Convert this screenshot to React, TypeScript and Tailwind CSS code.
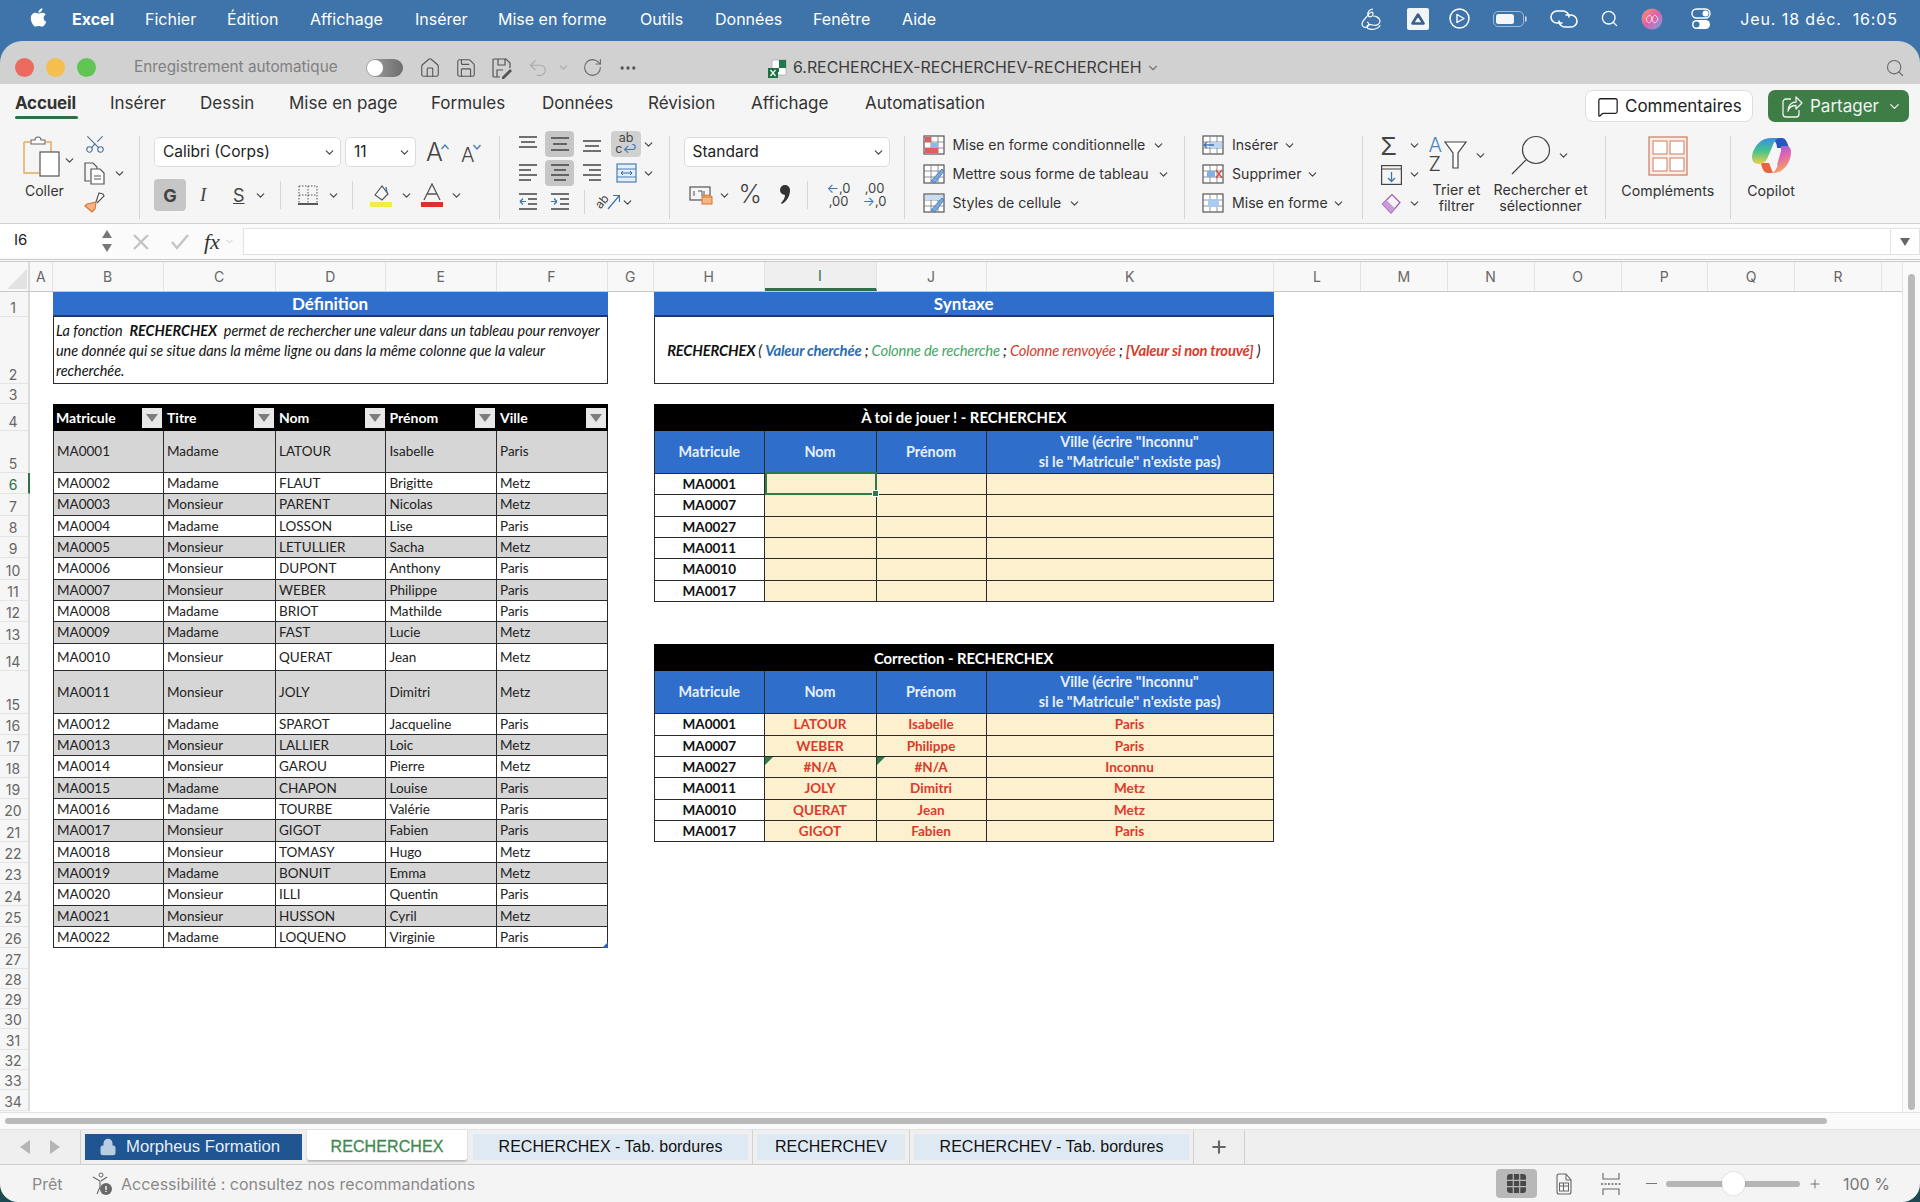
import type { ReactNode } from "react";
import { FaApple } from "react-icons/fa";
import {
  ChevronDown,
  Ellipsis,
  House,
  Lock,
  MessageSquare,
  Plus,
  RotateCw,
  Save,
  Scissors,
  Search,
  Undo2,
} from "lucide-react";

/* ─── Data ───────────────────────────────────────────────────────────── */

const UI = "font-['Inter','Liberation_Sans',sans-serif]";
const SHEET = "font-['Lato','Liberation_Sans',sans-serif]";

const MENU = [
  { label: "Fichier", w: "w-[54px]" },
  { label: "Édition", w: "w-[55px]" },
  { label: "Affichage", w: "w-[77px]" },
  { label: "Insérer", w: "w-[55px]" },
  { label: "Mise en forme", w: "w-[114px]" },
  { label: "Outils", w: "w-[47px]" },
  { label: "Données", w: "w-[70px]" },
  { label: "Fenêtre", w: "w-[61px]" },
  { label: "Aide", w: "w-[35px]" },
];

const TABS = [
  { label: "Insérer", w: "w-[57px]" },
  { label: "Dessin", w: "w-[56px]" },
  { label: "Mise en page", w: "w-[109px]" },
  { label: "Formules", w: "w-[78px]" },
  { label: "Données", w: "w-[73px]" },
  { label: "Révision", w: "w-[70px]" },
  { label: "Affichage", w: "w-[81px]" },
  { label: "Automatisation", w: "w-[125px]" },
];

const COLUMNS = [
  { label: "A", w: "w-[22.5px]" },
  { label: "B", w: "w-[111px]" },
  { label: "C", w: "w-[112px]" },
  { label: "D", w: "w-[110.5px]" },
  { label: "E", w: "w-[110.5px]" },
  { label: "F", w: "w-[111px]" },
  { label: "G", w: "w-[46.5px]" },
  { label: "H", w: "w-[110.5px]" },
  { label: "I", w: "w-[112px]" },
  { label: "J", w: "w-[110px]" },
  { label: "K", w: "w-[287.5px]" },
  { label: "L", w: "w-[87px]" },
  { label: "M", w: "w-[86.5px]" },
  { label: "N", w: "w-[87px]" },
  { label: "O", w: "w-[87px]" },
  { label: "P", w: "w-[86.5px]" },
  { label: "Q", w: "w-[87px]" },
  { label: "R", w: "w-[87px]" },
];

const ROW_H = "h-[21.33px]";
const BLANK_H = "h-[20.3px]";
const ROW_HEADS = [
  "h-[25px]", "h-[67px]", "h-[20px]", "h-[27px]", "h-[42px]",
  ROW_H, ROW_H, ROW_H, ROW_H, ROW_H, ROW_H, ROW_H, ROW_H,
  "h-[27px]", "h-[43px]",
  ROW_H, ROW_H, ROW_H, ROW_H, ROW_H, ROW_H, ROW_H, ROW_H, ROW_H, ROW_H, ROW_H,
  BLANK_H, BLANK_H, BLANK_H, BLANK_H, BLANK_H, BLANK_H, BLANK_H, BLANK_H,
];

const PEOPLE = [
  ["MA0001", "Madame", "LATOUR", "Isabelle", "Paris", "h-[42px]"],
  ["MA0002", "Madame", "FLAUT", "Brigitte", "Metz", ROW_H],
  ["MA0003", "Monsieur", "PARENT", "Nicolas", "Metz", ROW_H],
  ["MA0004", "Madame", "LOSSON", "Lise", "Paris", ROW_H],
  ["MA0005", "Monsieur", "LETULLIER", "Sacha", "Metz", ROW_H],
  ["MA0006", "Monsieur", "DUPONT", "Anthony", "Paris", ROW_H],
  ["MA0007", "Monsieur", "WEBER", "Philippe", "Paris", ROW_H],
  ["MA0008", "Madame", "BRIOT", "Mathilde", "Paris", ROW_H],
  ["MA0009", "Madame", "FAST", "Lucie", "Metz", ROW_H],
  ["MA0010", "Monsieur", "QUERAT", "Jean", "Metz", "h-[27px]"],
  ["MA0011", "Monsieur", "JOLY", "Dimitri", "Metz", "h-[43px]"],
  ["MA0012", "Madame", "SPAROT", "Jacqueline", "Paris", ROW_H],
  ["MA0013", "Monsieur", "LALLIER", "Loic", "Metz", ROW_H],
  ["MA0014", "Monsieur", "GAROU", "Pierre", "Metz", ROW_H],
  ["MA0015", "Madame", "CHAPON", "Louise", "Paris", ROW_H],
  ["MA0016", "Madame", "TOURBE", "Valérie", "Paris", ROW_H],
  ["MA0017", "Monsieur", "GIGOT", "Fabien", "Paris", ROW_H],
  ["MA0018", "Monsieur", "TOMASY", "Hugo", "Metz", ROW_H],
  ["MA0019", "Madame", "BONUIT", "Emma", "Metz", ROW_H],
  ["MA0020", "Monsieur", "ILLI", "Quentin", "Paris", ROW_H],
  ["MA0021", "Monsieur", "HUSSON", "Cyril", "Metz", ROW_H],
  ["MA0022", "Madame", "LOQUENO", "Virginie", "Paris", ROW_H],
];

const ANSWERS = [
  ["MA0001", "LATOUR", "Isabelle", "Paris"],
  ["MA0007", "WEBER", "Philippe", "Paris"],
  ["MA0027", "#N/A", "#N/A", "Inconnu"],
  ["MA0011", "JOLY", "Dimitri", "Metz"],
  ["MA0010", "QUERAT", "Jean", "Metz"],
  ["MA0017", "GIGOT", "Fabien", "Paris"],
];

const BORDER = "border-[#2a2a2a] border-r-[1.5px] border-b-[1.5px]";
const LEFT_GRID = "grid grid-cols-[111px_112px_110.5px_110.5px_111px]";
const RIGHT_GRID = "grid grid-cols-[110.5px_112px_110px_287px]";

/* ─── Small parts ────────────────────────────────────────────────────── */

function Chev({ className = "" }: { className?: string }) {
  return <ChevronDown size={13} strokeWidth={2.2} className={`shrink-0 text-[#444] ${className}`} />;
}

function Ico({ w, h, children, className = "" }: { w: number; h: number; children: ReactNode; className?: string }) {
  return (
    <svg width={w} height={h} viewBox={`0 0 ${w} ${h}`} fill="none" className={`shrink-0 ${className}`}>
      {children}
    </svg>
  );
}

function GridIcon({ children }: { children?: ReactNode }) {
  return (
    <Ico w={22} h={20}>
      <rect x={1} y={1} width={20} height={18} stroke="#555" strokeWidth={1.2} fill="#fff" />
      <path d="M1 7h20M1 13h20M8 1v18M15 1v18" stroke="#777" strokeWidth={0.8} />
      {children}
    </Ico>
  );
}

/* ─── Top bars ───────────────────────────────────────────────────────── */

function MenuBar() {
  return (
    <div className={`${UI} h-[41px] shrink-0 flex items-center text-white text-[16px] pl-[28px] pr-[22px] pb-[4px]`}>
      <FaApple size={21} className="mb-[2px]" />
      <span className="ml-[23px] w-[46px] font-bold">Excel</span>
      <div className="flex ml-[27px] gap-[28px]">
        {MENU.map((m) => (
          <span key={m.label} className={`${m.w} whitespace-nowrap`}>{m.label}</span>
        ))}
      </div>
      <div className="ml-auto flex items-center">
        <Ico w={24} h={24}>
          <path d="M14 2c-3 0-6 3-5 6s5 2 5-1-3-2-5 1-6 6-6 9 3 4 5 3 3-4 0-5m6-6c3 0 7 2 7 5s-3 5-7 4-6 0-6 2 5 3 8 2 5-2 5-4" stroke="#fff" strokeWidth={1.2} />
        </Ico>
        <div className="ml-[24px] w-[22px] h-[22px] bg-[#f2f5f8] rounded-[2px] flex items-center justify-center">
          <Ico w={14} h={12}>
            <path d="M7 1.500 12.500 10.500H1.500Z" fill="#f2f5f8" stroke="#3a5f8a" strokeWidth={2.600} strokeLinejoin="round" />
          </Ico>
        </div>
        <Ico w={21} h={21} className="ml-[20px]">
          <circle cx={10.500} cy={10.500} r={9.500} stroke="#fff" strokeWidth={1.500} />
          <path d="M8 6.500 15 10.500 8 14.500Z" stroke="#fff" strokeWidth={1.400} strokeLinejoin="round" />
        </Ico>
        <Ico w={34} h={16} className="ml-[23px]">
          <rect x={.5} y={.5} width={30} height={15} rx={4.500} stroke="#d5e1ee" opacity={0.65} />
          <rect x={3} y={3} width={18} height={10} rx={2.500} fill="#f4f7fa" />
          <rect x={32} y={5.500} width={1.500} height={5} fill="#d5e1ee" />
        </Ico>
        <Ico w={30} h={20} className="ml-[22px]">
          <path d="M13 14H8A6 6 0 0 1 8 2h6a6 6 0 0 1 6 6" stroke="#fff" strokeWidth={1.600} strokeLinecap="round" />
          <path d="M17 6h5a6 6 0 0 1 0 12h-6a6 6 0 0 1-6-6" stroke="#fff" strokeWidth={1.600} strokeLinecap="round" />
        </Ico>
        <Search size={19} strokeWidth={1.7} className="ml-[21px]" />
        <Ico w={22} h={24} className="ml-[22px]">
          <defs>
            <linearGradient id="siri" x1="0" y1="0" x2="1" y2="1">
              <stop offset="0" stopColor="#f59a6a" />
              <stop offset=".5" stopColor="#e05fa8" />
              <stop offset="1" stopColor="#6fa8ea" />
            </linearGradient>
          </defs>
          <circle cx={11} cy={12} r={10.500} fill="url(#siri)" />
          <path d="M5 12c3-5 5-5 6 0s4 5 6 0c-2-5-4-5-6 0s-4 5-6 0Z" stroke="#fff" strokeWidth={1} opacity={0.75} />
        </Ico>
        <Ico w={20} h={22} className="ml-[28px]">
          <rect x={1} y={1} width={18} height={9} rx={4.500} stroke="#fff" strokeWidth={1.400} />
          <circle cx={14.500} cy={5.500} r={3} fill="#fff" />
          <rect x={1} y={12} width={18} height={9} rx={4.500} fill="#fff" />
          <circle cx={5.500} cy={16.500} r={3} fill="#3e74a9" />
        </Ico>
        <span className="ml-[29px] whitespace-pre tracking-[0.9px]">Jeu. 18 déc.  16:05</span>
      </div>
    </div>
  );
}

function TitleBar() {
  return (
    <div className={`${UI} h-[43px] shrink-0 bg-[#d1d1d1] flex items-center pl-[15px] pt-[10px] text-[#808080]`}>
      <div className="flex gap-[12px]">
        <span className="w-[19px] h-[19px] rounded-full bg-[#ec6a5e]" />
        <span className="w-[19px] h-[19px] rounded-full bg-[#f4bf4f]" />
        <span className="w-[19px] h-[19px] rounded-full bg-[#61c554]" />
      </div>
      <span className="ml-[38px] w-[232px] text-[15.3px] whitespace-nowrap">Enregistrement automatique</span>
      <div className="w-[37px] h-[18px] rounded-full bg-gradient-to-r from-[#a5a5a5] to-[#6e6e6e] flex items-center pl-[1px]">
        <span className="w-[16px] h-[16px] rounded-full bg-white" />
      </div>
      <House size={22} strokeWidth={1.2} className="ml-[16px] text-[#555]" />
      <Save size={22} strokeWidth={1.2} className="ml-[14px] text-[#555]" />
      <Ico w={22} h={22} className="ml-[14px]">
        <path d="M3 2h12l4 4v5M3 2a1 1 0 0 0-1 1v16a1 1 0 0 0 1 1h6M7 2v6h7V2M6 20v-7h6" stroke="#555" strokeWidth={1.2} />
        <path d="M11 20l8-8 2 2-8 8h-2Z" fill="#555" />
      </Ico>
      <Undo2 size={22} strokeWidth={1.2} className="ml-[14px] text-[#aaa]" />
      <ChevronDown size={13} className="ml-[8px] text-[#aaa]" />
      <RotateCw size={21} strokeWidth={1.2} className="ml-[12px] text-[#666]" />
      <Ellipsis size={20} className="ml-[15px] text-[#555]" />
      <Ico w={20} h={22} className="ml-[130px]">
        <path d="M4 3h14v15H4Z" fill="#fff" stroke="#aaa" strokeWidth={0.8} />
        <path d="M11 3h7v8h-7ZM6 11h5v4H6Z" fill="#21794a" />
        <rect x={0} y={11} width={10} height={10} fill="#1d7044" />
        <path d="M2.500 13 7.500 19M7.500 13 2.500 19" stroke="#fff" strokeWidth={1.2} />
      </Ico>
      <span className="ml-[5px] w-[349px] text-[15.9px] text-[#3c3c3c] whitespace-nowrap">6.RECHERCHEX-RECHERCHEV-RECHERCHEH</span>
      <ChevronDown size={14} className="ml-[4px] text-[#777]" />
      <Search size={20} strokeWidth={1.3} className="ml-auto mr-[15px] text-[#666]" />
    </div>
  );
}

function TabBar() {
  return (
    <div className={`${UI} h-[39px] shrink-0 bg-[#f5f5f5] flex items-start pl-[15px] pr-[11px] text-[#333] text-[17px]`}>
      <div className="w-[63px] h-[35px] flex flex-col justify-between">
        <span className="font-bold mt-[8px] leading-[22px] tracking-[-0.2px]">Accueil</span>
        <span className="h-[3.5px] rounded-full bg-[#2f7146]" />
      </div>
      <div className="flex gap-[33px] ml-[32px] mt-[8px] leading-[22px]">
        {TABS.map((t) => (
          <span key={t.label} className={`${t.w} whitespace-nowrap`}>{t.label}</span>
        ))}
      </div>
      <div className="ml-auto mt-[6px] flex gap-[15px]">
        <div className="w-[168px] h-[32px] pt-[1px] bg-white rounded-[8px] border border-[#dedede] flex items-center pl-[11px] gap-[6px] text-[#222]">
          <MessageSquare size={22} strokeWidth={1.4} />
          Commentaires
        </div>
        <div className="w-[141px] h-[32px] pt-[1px] bg-[#3f7d47] rounded-[7px] flex items-center pl-[13px] gap-[6px] text-[#f2f2f2]">
          <Ico w={23} h={22}>
            <path d="M10 3H5a3 3 0 0 0-3 3v12a3 3 0 0 0 3 3h10a3 3 0 0 0 3-3v-4M15 1l6 6-6 6V9.500C11 9.500 8 11 7 15c0-5 3-9 8-9Z" stroke="#f2f2f2" strokeWidth={1.3} strokeLinejoin="round" />
          </Ico>
          Partager
          <ChevronDown size={15} className="ml-auto mr-[7px]" />
        </div>
      </div>
    </div>
  );
}

/* ─── Ribbon ─────────────────────────────────────────────────────────── */

function Select({ label, w, pad = "pl-[8px]" }: { label: string; w: string; pad?: string }) {
  return (
    <div className={`${w} ${pad} h-[30px] bg-white border border-[#dcdcdc] rounded-[5px] flex items-center justify-between pr-[4px] text-[15.5px] text-[#222]`}>
      {label}
      <Chev />
    </div>
  );
}

function ClipboardGroup() {
  return (
    <div className="w-[140px] h-[83px] shrink-0 border-r border-[#d5d5d5] flex">
      <div className="w-[76px] pl-[22px]">
        <div className="flex items-center">
          <Ico w={38} h={41}>
            <path d="M2 6h6M24 6h5v10" stroke="#e8a95a" strokeWidth={1.5} />
            <path d="M2 6v31h15" stroke="#e8a95a" strokeWidth={1.5} />
            <path d="M9 8V4h4a3 3 0 0 1 6 0h4v4Z" stroke="#666" strokeWidth={1.1} fill="#fff" />
            <rect x={18} y={16} width={19} height={24} fill="#fff" stroke="#555" strokeWidth={1.2} />
          </Ico>
          <Chev className="ml-[3px] mt-[8px]" />
        </div>
        <p className="text-[14px] text-[#333] mt-[3px] ml-[3px]">Coller</p>
      </div>
      <div className="flex flex-col items-start pl-[7px] gap-[6px] -mt-[3px]">
        <Scissors size={22} strokeWidth={1.2} className="text-[#4a6f9e] rotate-[-90deg] ml-[1px]" />
        <div className="flex items-center gap-[6px]">
          <Ico w={24} h={24}>
            <path d="M7 20H2V2h8l4 4v3" stroke="#555" strokeWidth={1.2} />
            <path d="M8 8h9l4 4v11H8ZM11 15h7M11 18h7" stroke="#555" strokeWidth={1.2} fill="#fff" />
          </Ico>
          <Chev />
        </div>
        <Ico w={24} h={22}>
          <path d="M13 11l-9 2-2 2 7 6 3-3 1-7Z" fill="#f4b183" stroke="#d9772f" strokeWidth={1.2} />
          <path d="M13 11l3-9 4 1 1 2-7 7" stroke="#555" strokeWidth={1.2} fill="#fff" />
        </Ico>
      </div>
    </div>
  );
}

function FontGroup() {
  return (
    <div className="w-[360px] h-[83px] shrink-0 border-r border-[#d5d5d5] pl-[14px] pt-[1px]">
      <div className="flex items-center">
        <Select label="Calibri (Corps)" w="w-[187px]" />
        <Select label="11" w="w-[71px] ml-[4px]" />
        <span className="ml-[10px] w-[35px] flex text-[25px] leading-none text-[#444] font-light">
          A
          <Ico w={10} h={8} className="mt-[3px] -ml-[3px]"><path d="M1.500 6 5 2l3.500 4" stroke="#4a7fb5" strokeWidth={1.400} /></Ico>
        </span>
        <span className="w-[28px] flex text-[20px] leading-none text-[#444] mt-[5px] font-light">
          A
          <Ico w={10} h={8} className="-mt-[2px] -ml-[2px]"><path d="M1.500 2 5 6l3.500-4" stroke="#4a7fb5" strokeWidth={1.400} /></Ico>
        </span>
      </div>
      <div className="flex items-center mt-[12px] text-[#444]">
        <span className="w-[32px] h-[32px] bg-[#c6c6c6] rounded-[4px] flex items-center justify-center font-bold text-[18px]">G</span>
        <span className="ml-[14px] w-[10px] italic font-['Liberation_Serif',serif] text-[19px]">I</span>
        <span className="ml-[23px] w-[12px] underline text-[18px]">S</span>
        <Chev className="ml-[9px]" />
        <span className="ml-[13px] h-[28px] border-l border-[#d5d5d5]" />
        <Ico w={20} h={20} className="ml-[17px]">
          <path d="M1 1h18M1 10h18M10 1v18M1 1v18M19 1v18" stroke="#555" strokeDasharray="1.5 1.5" />
          <path d="M0 19h20" stroke="#222" strokeWidth={1.6} />
        </Ico>
        <Chev className="ml-[9px]" />
        <span className="ml-[12px] h-[28px] border-l border-[#d5d5d5]" />
        <Ico w={24} h={24} className="ml-[16px]">
          <path d="M6 12 13 3l6 8-6 6Z" stroke="#555" strokeWidth={1.2} />
          <path d="M17 4l1 6" stroke="#3a74b5" strokeWidth={1.4} />
          <rect x={1} y={19} width={22} height={5} fill="#f6e94a" />
        </Ico>
        <Chev className="ml-[7px]" />
        <Ico w={22} h={24} className="ml-[8px]">
          <path d="M3 17 11 1l8 16M6 11h10" stroke="#555" strokeWidth={1.3} />
          <rect x={0} y={19} width={22} height={5} fill="#e02f24" />
        </Ico>
        <Chev className="ml-[7px]" />
      </div>
    </div>
  );
}

function AlignGroup() {
  const cell = "w-[29px] h-[26px] flex items-center justify-center";
  const on = "bg-[#c6c6c6] rounded-[4px]";
  return (
    <div className="w-[169.5px] h-[83px] shrink-0 border-r border-[#d5d5d5] pl-[13px]">
      <div className="-mt-[5px] flex flex-col gap-[3px]">
        <div className="flex items-center h-[26px] shrink-0">
          <span className={cell}>
            <Ico w={20} h={18}><path d="M1 2h18M3 7h14M1 12h18" stroke="#444" strokeWidth={1.5} /></Ico>
          </span>
          <span className={`${cell} ${on} ml-[3px]`}>
            <Ico w={20} h={18}><path d="M1 3h18M3 9h14M1 15h18" stroke="#444" strokeWidth={1.5} /></Ico>
          </span>
          <span className={`${cell} ml-[3px]`}>
            <Ico w={20} h={18}><path d="M1 6h18M3 11h14M1 16h18" stroke="#444" strokeWidth={1.5} /></Ico>
          </span>
          <span className="ml-[5px] w-[30px] h-[26px] bg-[#d0d0d0] rounded-[4px] text-[12.5px] leading-[11px] text-[#444] text-center pt-[1px]">ab<br />c<span className="text-[#3a74b5]">↩</span></span>
          <Chev className="ml-[1px]" />
        </div>
        <div className="flex items-center h-[26px] shrink-0">
          <span className={cell}>
            <Ico w={20} h={20}><path d="M1 2h18M1 7h12M1 12h18M1 17h12" stroke="#444" strokeWidth={1.5} /></Ico>
          </span>
          <span className={`${cell} ${on} ml-[3px]`}>
            <Ico w={20} h={20}><path d="M1 2h18M4 7h12M1 12h18M4 17h12" stroke="#444" strokeWidth={1.5} /></Ico>
          </span>
          <span className={`${cell} ml-[3px]`}>
            <Ico w={20} h={20}><path d="M1 2h18M7 7h12M1 12h18M7 17h12" stroke="#444" strokeWidth={1.5} /></Ico>
          </span>
          <span className="ml-[5px] w-[30px] flex items-center justify-center">
            <Ico w={21} h={20}>
              <rect x={1} y={1} width={19} height={18} stroke="#4a7fb5" strokeWidth={1.2} fill="#e3eefa" />
              <path d="M1 6h19M1 14h19" stroke="#4a7fb5" />
              <path d="M5 10h11M5 10l2-2M5 10l2 2M16 10l-2-2M16 10l-2 2" stroke="#34679e" />
            </Ico>
          </span>
          <Chev className="ml-[1px]" />
        </div>
        <div className="flex items-center h-[26px] shrink-0">
          <span className={cell}>
            <Ico w={20} h={20}><path d="M1 2h18M10 7h9M10 12h9M1 17h18" stroke="#444" strokeWidth={1.5} /><path d="M8 9.500H2M2 9.500l3-3M2 9.500l3 3" stroke="#3a74b5" strokeWidth={1.2} /></Ico>
          </span>
          <span className={`${cell} ml-[3px]`}>
            <Ico w={20} h={20}><path d="M1 2h18M10 7h9M10 12h9M1 17h18" stroke="#444" strokeWidth={1.5} /><path d="M1 9.500h6M7 9.500l-3-3M7 9.500l-3 3" stroke="#3a74b5" strokeWidth={1.2} /></Ico>
          </span>
          <span className="ml-[10px] h-[24px] border-l border-[#d5d5d5]" />
          <span className="ml-[10px] w-[13px] text-[#444] text-[12px] rotate-[-50deg] leading-none">ab</span>
          <Ico w={13} h={16} className="-ml-[1px]"><path d="M1 15 12 2M6 1.500h6.500V8" stroke="#3a74b5" strokeWidth={1.200} /></Ico>
          <Chev className="ml-[1px]" />
        </div>
      </div>
    </div>
  );
}

function NumberGroup() {
  return (
    <div className="w-[235px] h-[83px] shrink-0 border-r border-[#d5d5d5] pl-[14px] pt-[1px]">
      <Select label="Standard" w="w-[206px]" />
      <div className="flex items-center mt-[12px] h-[32px] text-[#444]">
        <Ico w={24} h={20} className="ml-[5px]">
          <rect x={1} y={2} width={20} height={13} stroke="#555" strokeWidth={1.2} />
          <path d="M5 6v5M9 6h4v5M15 6v5" stroke="#555" />
          <ellipse cx={18} cy={12} rx={5} ry={2} fill="#f2b783" stroke="#d9772f" />
          <rect x={13} y={12} width={10} height={7} fill="#f2b783" stroke="#d9772f" />
        </Ico>
        <Chev className="ml-[5px]" />
        <span className="ml-[8px] w-[24px] text-[25px] font-light">%</span>
        <Ico w={11} h={20} className="ml-[17px]">
          <path d="M5 0a5 5 0 0 1 5 5c0 6-3 11-8 14l-1-1c2-2 4-5 4-8a5 5 0 0 1 0-10Z" fill="#333" />
        </Ico>
        <span className="ml-[16px] h-[28px] border-l border-[#d5d5d5]" />
        <div className="ml-[19px] flex w-[22px] flex-col text-[13px] leading-[13px] text-right">
          <span><span className="text-[#3a74b5]">←</span>,0</span>
          <span>,00</span>
        </div>
        <div className="ml-[14px] flex w-[22px] flex-col text-[13px] leading-[13px] text-right">
          <span>,00</span>
          <span><span className="text-[#3a74b5]">→</span>,0</span>
        </div>
      </div>
    </div>
  );
}

function StyleRow({ icon, label, w }: { icon: ReactNode; label: string; w: string }) {
  return (
    <div className="flex items-center h-[29px] shrink-0">
      {icon}
      <span className={`${w} ml-[8px] text-[14.1px] text-[#333] whitespace-nowrap`}>{label}</span>
      <Chev className="ml-[6px]" />
    </div>
  );
}

function StylesGroup() {
  return (
    <div className="w-[280.500px] h-[83px] shrink-0 border-r border-[#d5d5d5] pl-[18px]">
      <div className="-mt-[5.500px] flex flex-col">
        <StyleRow
          w="w-[193px]"
          label="Mise en forme conditionnelle"
          icon={<GridIcon><rect x={2} y={2} width={6} height={5} fill="#e35d5d" /><rect x={2} y={13} width={13} height={5} fill="#e35d5d" /><rect x={8} y={8} width={7} height={5} fill="#8fb8e8" /></GridIcon>}
        />
        <StyleRow
          w="w-[198px]"
          label="Mettre sous forme de tableau"
          icon={<GridIcon><path d="M8 17 19 5l2 2-9 12Z" fill="#7aa7dc" stroke="#3a74b5" strokeWidth={0.8} /></GridIcon>}
        />
        <StyleRow
          w="w-[109px]"
          label="Styles de cellule"
          icon={<GridIcon><rect x={2} y={2} width={18} height={5} fill="#c7dcf5" /><path d="M8 17 19 5l2 2-9 12Z" fill="#7aa7dc" stroke="#3a74b5" strokeWidth={0.8} /></GridIcon>}
        />
      </div>
    </div>
  );
}

function CellsGroup() {
  return (
    <div className="w-[177.500px] h-[83px] shrink-0 border-r border-[#d5d5d5] pl-[17px]">
      <div className="-mt-[5.500px] flex flex-col">
        <StyleRow
          w="w-[45px]"
          label="Insérer"
          icon={<GridIcon><rect x={8} y={7} width={12} height={6} fill="#bcd6f3" /><path d="M12 10H2M2 10l3-3M2 10l3 3" stroke="#3a74b5" strokeWidth={1.3} /></GridIcon>}
        />
        <StyleRow
          w="w-[68px]"
          label="Supprimer"
          icon={<GridIcon><rect x={5} y={7} width={8} height={6} fill="#7fb0e6" /><path d="M14 6l6 8M20 6l-6 8" stroke="#d94a3d" strokeWidth={1.3} /></GridIcon>}
        />
        <StyleRow
          w="w-[94px]"
          label="Mise en forme"
          icon={<GridIcon><rect x={6} y={6} width={11} height={8} fill="#a9cbf1" /></GridIcon>}
        />
      </div>
    </div>
  );
}

function EditGroup() {
  return (
    <div className="w-[243px] h-[83px] shrink-0 border-r border-[#d5d5d5] flex pl-[18px] text-[14.200px] text-[#333] leading-[16px]">
      <div className="w-[48px] -mt-[5px] flex flex-col">
        <div className="h-[29px] flex items-center shrink-0">
          <span className="w-[21px] text-[26px] leading-none text-[#444] font-light font-['Liberation_Sans',sans-serif]">Σ</span>
          <Chev className="ml-[6px]" />
        </div>
        <div className="h-[29px] flex items-center shrink-0">
          <Ico w={21} h={20}><rect x={.6} y={.6} width={19.800} height={18.800} stroke="#444" strokeWidth={1.2} /><path d="M1 4h19" stroke="#444" /><path d="M10.500 7v9M7 13l3.500 3.500L14 13" stroke="#3a74b5" strokeWidth={1.3} /></Ico>
          <Chev className="ml-[6px]" />
        </div>
        <div className="h-[29px] flex items-center shrink-0">
          <Ico w={21} h={22}><path d="M1.500 11 11 1.500l8 8L10 20Z" stroke="#9b59b6" strokeWidth={1.2} /><path d="M1.500 11l4-4 8.500 8.500L10 20Z" fill="#c79ad8" /></Ico>
          <Chev className="ml-[6px]" />
        </div>
      </div>
      <div className="w-[58px] shrink-0 flex flex-col items-center">
        <div className="flex items-center h-[38px] self-start">
          <span className="flex flex-col text-[20px] leading-[19px] font-light w-[15px]">
            <span className="text-[#4a85c2]">A</span>
            <span className="text-[#444]">Z</span>
          </span>
          <Ico w={23} h={28}>
            <path d="M1 1h21l-8 11v15h-5V12Z" stroke="#444" strokeWidth={1.2} fill="#fff" />
          </Ico>
          <Chev className="ml-[7px]" />
        </div>
        <p className="text-center mt-[8px] -ml-[2px]">Trier et<br />filtrer</p>
      </div>
      <div className="w-[96px] shrink-0 ml-[6px] flex flex-col items-center">
        <div className="flex items-center h-[38px]">
          <Ico w={40} h={40}>
            <circle cx={25} cy={15} r={13.500} stroke="#444" strokeWidth={1.2} />
            <path d="M15 25 1 39" stroke="#444" strokeWidth={1.2} />
          </Ico>
          <Chev className="ml-[6px]" />
        </div>
        <p className="text-center mt-[8px] whitespace-nowrap">Rechercher et<br />sélectionner</p>
      </div>
    </div>
  );
}

function ExtrasGroups() {
  return (
    <>
      <div className="w-[125.500px] h-[83px] shrink-0 border-r border-[#d5d5d5] flex flex-col items-center text-[14.200px] text-[#333]">
        <Ico w={40} h={40}>
          <rect x={1} y={1} width={38} height={38} stroke="#cf7a5d" strokeWidth={1.2} fill="#fbeee9" />
          <rect x={5} y={5} width={14} height={13} stroke="#cf7a5d" fill="#fff" />
          <rect x={22} y={5} width={14} height={13} stroke="#cf7a5d" fill="#fff" />
          <rect x={5} y={22} width={14} height={13} stroke="#cf7a5d" fill="#fff" />
          <rect x={22} y={22} width={14} height={13} stroke="#cf7a5d" fill="#fff" />
        </Ico>
        <span className="mt-[7px] leading-[16px]">Compléments</span>
      </div>
      <div className="w-[80px] h-[83px] flex flex-col items-center text-[14.200px] text-[#333]">
        <Ico w={41} h={37} className="mt-[1px]">
          <defs>
            <linearGradient id="cpL" x1="0" y1="0" x2="0" y2="1">
              <stop offset="0" stopColor="#3a8fe8" />
              <stop offset=".5" stopColor="#45c38c" />
              <stop offset="1" stopColor="#f0d04a" />
            </linearGradient>
            <linearGradient id="cpR" x1="0" y1="0" x2="0.3" y2="1">
              <stop offset="0" stopColor="#8f5fe0" />
              <stop offset=".5" stopColor="#e065b0" />
              <stop offset="1" stopColor="#f5a060" />
            </linearGradient>
          </defs>
          <path d="M20 1h11c3 0 5 3 7 10H26c0-4-2-8-6-10Z" fill="#2a55c0" />
          <path d="M10 26h8l4 10h-5c-4 0-6-4-7-10Z" fill="#e8643c" />
          <path d="M20 1h10c-4 0-6 2-8 7l-6 14c-2 4-5 5-9 5-4 0-6-3-6-7 0-3 1-6 3-9 3-6 9-10 16-10Z" fill="url(#cpL)" />
          <path d="M30 9h5c3 0 5 2 5 6 0 10-7 21-18 21h-3c4 0 6-3 8-8l-1 0 4-14c0-3 0-5 0-5Z" fill="url(#cpR)" />
        </Ico>
        <span className="mt-[9px] leading-[16px]">Copilot</span>
      </div>
    </>
  );
}

function Ribbon() {
  return (
    <div className={`${UI} h-[101px] shrink-0 bg-[#f5f5f5] border-b border-[#d2d2d2] pt-[13px] flex items-start`}>
      <ClipboardGroup />
      <FontGroup />
      <AlignGroup />
      <NumberGroup />
      <StylesGroup />
      <CellsGroup />
      <EditGroup />
      <ExtrasGroups />
    </div>
  );
}

function FormulaBar() {
  return (
    <div className={`${UI} h-[38px] shrink-0 bg-[#fbfbfb] border-b-[3px] border-double border-[#c9c9c9] flex items-stretch`}>
      <div className="w-[112px] h-[33px] bg-white flex items-center justify-between pl-[14px] pr-[0px] text-[15px] text-[#222]">
        I6
        <div className="flex flex-col gap-[6px] text-[#777]">
          <Ico w={10} h={8}><path d="M5 0l5 8H0Z" fill="#777" /></Ico>
          <Ico w={10} h={8}><path d="M5 8 0 0h10Z" fill="#777" /></Ico>
        </div>
      </div>
      <div className="w-[131px] flex items-center text-[#c4c4c4]">
        <Ico w={16} h={16} className="ml-[21px]"><path d="M1 1l14 14M15 1 1 15" stroke="#c4c4c4" strokeWidth={2.400} /></Ico>
        <Ico w={18} h={16} className="ml-[22px]"><path d="M1 8l5 6L17 1" stroke="#c4c4c4" strokeWidth={2.400} /></Ico>
        <span className="ml-[15px] text-[#333] text-[22px] italic font-['Liberation_Serif',serif]">fx</span>
        <ChevronDown size={11} className="ml-[4px]" />
      </div>
      <div className="flex-1 my-[4px] bg-white border border-[#e2e2e2]" />
      <div className="w-[29px] my-[4px] bg-white border border-l-0 border-[#e2e2e2] flex items-center justify-center">
        <Ico w={10} h={8}><path d="M0 0h10L5 8Z" fill="#666" /></Ico>
      </div>
    </div>
  );
}

/* ─── Sheet ──────────────────────────────────────────────────────────── */

function ColumnHeaders() {
  return (
    <div className={`${UI} h-[30px] shrink-0 bg-[#f8f8f8] border-b-[1.500px] border-[#c8c8c8] flex text-[14px] text-[#666] pr-[18px]`}>
      <div className="w-[30px] border-r-2 border-[#dcdcdc] flex items-end pb-[2px] pl-[7px]">
        <Ico w={20} h={20}><path d="M20 0v20H0Z" fill="#e2e2e2" /></Ico>
      </div>
      {COLUMNS.map((c) => (
        <div
          key={c.label}
          className={`${c.w} border-r border-[#e4e4e4] flex items-center justify-center ${
            c.label === "I" ? "bg-[#efefef] text-[#2f7146] border-b-[3px] border-b-[#2f7146]" : ""
          }`}
        >
          {c.label}
        </div>
      ))}
      <div className="flex-1" />
    </div>
  );
}

function RowHeaders() {
  return (
    <div className={`${UI} w-[30px] shrink-0 bg-[#f6f6f6] text-[14px] text-[#666]`}>
      {ROW_HEADS.map((h, i) => (
        <div
          key={i}
          className={`${h} border-b border-b-[#e4e4e4] border-r-2 flex items-end justify-center pr-[2px] leading-[16px] ${
            i === 5 ? "border-r-[#2f7146] text-[#2f7146]" : "border-r-[#dcdcdc]"
          }`}
        >
          {i + 1}
        </div>
      ))}
    </div>
  );
}

function BlueTitle({ label }: { label: string }) {
  return (
    <div className="h-[25px] pt-[1px] bg-[#2f6fcb] border-b-2 border-[#1f3c66] text-white font-bold text-[17px] flex items-center justify-center">
      {label}
    </div>
  );
}

function PeopleTable() {
  const heads = ["Matricule", "Titre", "Nom", "Prénom", "Ville"];
  return (
    <div className="relative text-[13.500px] text-[#222]">
      <div className={`${LEFT_GRID} h-[27px] bg-black text-white font-bold text-[14px]`}>
        {heads.map((h) => (
          <div key={h} className="flex items-center justify-between pl-[3.500px] pr-[1.500px]">
            {h}
            <span className="w-[20px] h-[20px] bg-[#e8e8e8] flex items-center justify-center">
              <Ico w={12} h={8}><path d="M0 0h12L6 8Z" fill="#7d7d7d" /></Ico>
            </span>
          </div>
        ))}
      </div>
      {PEOPLE.map((row, i) => (
        <div key={row[0]} className={`${LEFT_GRID} ${row[5]} ${i % 2 === 0 ? "bg-[#d6d6d6]" : "bg-white"}`}>
          {row.slice(0, 5).map((v, j) => (
            <div key={j} className={`${BORDER} ${j === 0 ? "border-l-[1.500px]" : ""} flex items-center pl-[3.500px]`}>{v}</div>
          ))}
        </div>
      ))}
      <Ico w={6} h={6} className="absolute right-0 bottom-0">
        <path d="M6 0v6H0Z" fill="#2f5fb0" />
      </Ico>
    </div>
  );
}

function ExerciseTable({ title, rows, answers }: { title: string; rows: string[][]; answers: boolean }) {
  return (
    <div className="text-[13.500px]">
      <div className="h-[27px] bg-black text-white font-bold text-[14.800px] flex items-center justify-center">{title}</div>
      <div className={`${RIGHT_GRID} h-[43px] bg-[#2f6fcb] text-[#e9f0fa] font-bold text-[14.400px] leading-[20px] text-center`}>
        <div className={`${BORDER} border-l-[1.500px] flex items-center justify-center`}>Matricule</div>
        <div className={`${BORDER} flex items-center justify-center`}>Nom</div>
        <div className={`${BORDER} flex items-center justify-center`}>Prénom</div>
        <div className={`${BORDER} flex items-center justify-center`}>
          <span>Ville (écrire "Inconnu"<br />si le "Matricule" n'existe pas)</span>
        </div>
      </div>
      {rows.map((r) => (
        <div key={r[0]} className={`${RIGHT_GRID} ${ROW_H} font-bold`}>
          <div className={`${BORDER} border-l-[1.500px] bg-white text-[#111] flex items-center justify-center`}>{r[0]}</div>
          {r.slice(1).map((v, j) => (
            <div key={j} className={`${BORDER} relative bg-[#fdf0cf] text-[#dc3a2b] flex items-center justify-center`}>
              {answers ? v : ""}
              {v === "#N/A" && answers && (
                <Ico w={8} h={8} className="absolute left-0 top-0"><path d="M0 0h8L0 8Z" fill="#2f7a48" /></Ico>
              )}
            </div>
          ))}
        </div>
      ))}
    </div>
  );
}

function SheetBody() {
  return (
    <div className={`${SHEET} flex-1 flex bg-white overflow-hidden`}>
      <RowHeaders />
      <div className="w-[22.500px] shrink-0" />
      <div className="w-[555px] shrink-0">
        <BlueTitle label="Définition" />
        <div className="h-[67px] border-x-[1.500px] border-b-[1.500px] border-[#2a2a2a] pl-[2.500px] pt-[4px] italic text-[14.400px] leading-[20px] text-[#111]">
          La fonction&nbsp; <b>RECHERCHEX</b>&nbsp; permet de rechercher une valeur dans un tableau pour renvoyer une donnée qui se situe dans la même ligne ou dans la même colonne que la valeur recherchée.
        </div>
        <div className="h-[20px]" />
        <PeopleTable />
      </div>
      <div className="w-[46.500px] shrink-0" />
      <div className="relative w-[619.500px] shrink-0">
        <BlueTitle label="Syntaxe" />
        <div className="h-[67px] border-x-[1.500px] border-b-[1.500px] border-[#2a2a2a] flex items-center justify-center italic text-[14.800px] text-[#111] whitespace-nowrap tracking-[-0.2px]">
          <b>RECHERCHEX</b>
          <span className="ml-[3px]">(&nbsp;</span>
          <b className="text-[#2b6cb0]">Valeur cherchée</b>
          <span>&nbsp;;&nbsp;</span>
          <span className="text-[#3fa765]">Colonne de recherche</span>
          <span>&nbsp;;&nbsp;</span>
          <span className="text-[#d93a2b]">Colonne renvoyée</span>
          <span>&nbsp;;&nbsp;</span>
          <b className="text-[#d93a2b]">[Valeur si non trouvé]</b>
          <span>&nbsp;)</span>
        </div>
        <div className="h-[20px]" />
        <ExerciseTable title="À toi de jouer ! - RECHERCHEX" rows={ANSWERS} answers={false} />
        <div className="h-[42.340px]" />
        <ExerciseTable title="Correction - RECHERCHEX" rows={ANSWERS} answers />
        {/* selected cell I6 */}
        <div className="absolute left-[110.500px] top-[180px] w-[112px] h-[22.500px] border-[2.500px] border-[#2f7a48]">
          <span className="absolute -right-[4px] -bottom-[4px] w-[7px] h-[7px] bg-[#2f7a48] border border-white" />
        </div>
      </div>
    </div>
  );
}

function HScroll() {
  return (
    <div className="h-[18px] shrink-0 bg-[#fafafa] border-y border-[#e2e2e2] flex items-center pl-[5px]">
      <span className="w-[1822px] h-[6px] rounded-full bg-[#bababa]" />
    </div>
  );
}

/* ─── Bottom bars ────────────────────────────────────────────────────── */

function SheetTabs() {
  const plain = "h-[26px] bg-[#dfe9f4] text-[#111] flex items-center justify-center";
  const sep = "pr-[4px] border-r border-[#d2d2d2] h-[35px] flex items-start pt-[4px]";
  return (
    <div className="font-['Liberation_Sans',sans-serif] h-[35px] shrink-0 bg-[#efefef] border-b border-[#cfcfcf] flex text-[16px]">
      <div className="w-[81px] border-r border-[#d2d2d2] flex items-center gap-[20px] pl-[20px] mr-[4px]">
        <Ico w={10} h={14}><path d="M10 0v14L0 7Z" fill="#b5b5b5" /></Ico>
        <Ico w={10} h={14}><path d="M0 0v14L10 7Z" fill="#b5b5b5" /></Ico>
      </div>
      <div className="w-[222px] pt-[4px]">
        <div className="w-[217px] h-[26px] bg-[#1f5590] text-[#e8eef6] text-[16.700px] flex items-center pl-[14px] gap-[9px]">
          <Lock size={18} fill="#b9cce2" strokeWidth={2} className="text-[#b9cce2]" />
          Morpheus Formation
        </div>
      </div>
      <div className="w-[160px] h-[31px] pt-[3px] bg-white rounded-b-[3px] border-b border-[#b9b9b9] shadow-[0_1px_2px_rgba(0,0,0,.2)] flex items-center justify-center text-[#3f8a4f]">
        <span className="tracking-[0.1px] [-webkit-text-stroke:0.3px_#3f8a4f]">RECHERCHEX</span>
      </div>
      <div className={`${sep} w-[280px] ml-[6px]`}>
        <div className={`${plain} w-[275px]`}>RECHERCHEX - Tab. bordures</div>
      </div>
      <div className={`${sep} w-[153px] ml-[4px]`}>
        <div className={`${plain} w-[148px]`}>RECHERCHEV</div>
      </div>
      <div className={`${sep} w-[280px] ml-[4px]`}>
        <div className={`${plain} w-[275px]`}>RECHERCHEV - Tab. bordures</div>
      </div>
      <div className="w-[51px] border-r border-[#d2d2d2] flex items-center justify-center">
        <Plus size={20} strokeWidth={2.500} className="text-[#666]" />
      </div>
    </div>
  );
}

function StatusBar() {
  return (
    <div className={`${UI} flex-1 bg-[#f4f4f4] flex items-center pl-[32px] text-[16px] text-[#8a8a8a]`}>
      <span className="w-[60px]">Prêt</span>
      <Ico w={20} h={24}>
        <circle cx={9} cy={3} r={2} stroke="#666" />
        <path d="M1 5l7 4v6l-3 7M15 5 9 9" stroke="#666" strokeWidth={1.100} />
        <circle cx={14} cy={17} r={6} fill="#6a6a6a" />
        <path d="M14 14v4M14 19v1" stroke="#fff" strokeWidth={1.400} />
      </Ico>
      <span className="ml-[9px]">Accessibilité : consultez nos recommandations</span>
      <div className="ml-auto flex items-center pr-[31px]">
        <span className="w-[41px] h-[29px] rounded-[4px] bg-[#b8b8b8] flex items-center justify-center">
          <Ico w={19} h={19}>
            <path d="M3 0h13a3 3 0 0 1 3 3v13a3 3 0 0 1-3 3H3a3 3 0 0 1-3-3V3a3 3 0 0 1 3-3Z" fill="#484848" />
            <path d="M6.300 0v19M12.700 0v19M0 6.300h19M0 12.700h19" stroke="#b8b8b8" strokeWidth={1.200} />
          </Ico>
        </span>
        <Ico w={16} h={22} className="ml-[19px]">
          <path d="M1 3a2 2 0 0 1 2-2h7l5 6v12a2 2 0 0 1-2 2H3a2 2 0 0 1-2-2Z" stroke="#666" strokeWidth={1.100} />
          <path d="M10 1v6h5" stroke="#666" />
          <rect x={3.500} y={10} width={9} height={8} stroke="#666" />
          <path d="M3.500 13h9M7.500 10v8" stroke="#666" />
        </Ico>
        <Ico w={20} h={22} className="ml-[29px]">
          <path d="M2 0v6h16V0M2 22v-6h16v6" stroke="#666" strokeWidth={1.100} />
          <path d="M0 11h20" stroke="#666" strokeWidth={1.400} strokeDasharray="2 1.500" />
        </Ico>
        <span className="ml-[25px] w-[11px] h-[1.500px] bg-[#777]" />
        <div className="ml-[9px] w-[134px] h-[6px] rounded-full bg-[#b5b5b5] flex items-center justify-center">
          <span className="w-[23px] h-[23px] rounded-full bg-white shadow-[0_0_2px_rgba(0,0,0,.2)]" />
        </div>
        <Plus size={14} strokeWidth={1.500} className="ml-[8px] text-[#666]" />
        <span className="ml-[21px] w-[46px] whitespace-nowrap text-[#777]">100 %</span>
      </div>
    </div>
  );
}

/* ─── App ────────────────────────────────────────────────────────────── */

export default function App() {
  return (
    <div className="w-[1920px] h-[1202px] overflow-hidden flex flex-col bg-[linear-gradient(#3e74a9_50%,#1c4a50_50%)]">
      <MenuBar />
      <div className="flex-1 min-h-0 flex flex-col rounded-t-[22px] rounded-b-[18px] overflow-hidden">
        <TitleBar />
        <TabBar />
        <Ribbon />
        <FormulaBar />
        <div className="h-[850px] shrink-0 flex flex-col relative">
          <ColumnHeaders />
          <SheetBody />
          <div className="absolute right-0 top-0 bottom-0 w-[18px] bg-[#fafafa] border-l border-[#e6e6e6] flex justify-center pt-[12px] pb-[2px]">
            <span className="w-[7px] rounded-full bg-[#bababa]" />
          </div>
        </div>
        <HScroll />
        <SheetTabs />
        <StatusBar />
      </div>
    </div>
  );
}
